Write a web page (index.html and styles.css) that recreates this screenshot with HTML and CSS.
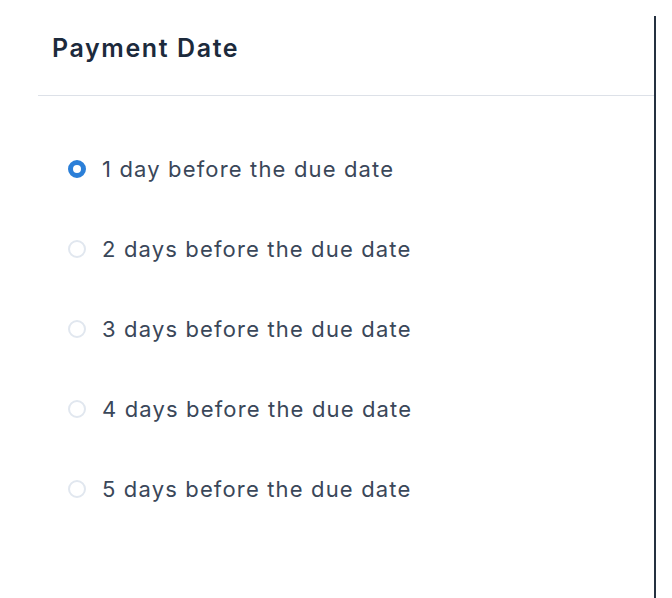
FILE: index.html
```html
<!DOCTYPE html>
<html>
<head>
<meta charset="utf-8">
<link rel="stylesheet" href="styles.css">
</head>
<body>
<div class="panel">
  <div class="header"><h2 class="title">Payment Date</h2></div>
  <div class="options">
    <label class="option"><span class="radio checked"></span><span class="label">1 day before the due date</span></label>
    <label class="option"><span class="radio"></span><span class="label">2 days before the due date</span></label>
    <label class="option"><span class="radio"></span><span class="label">3 days before the due date</span></label>
    <label class="option"><span class="radio"></span><span class="label">4 days before the due date</span></label>
    <label class="option"><span class="radio"></span><span class="label">5 days before the due date</span></label>
  </div>
</div>
</body>
</html>
```
FILE: styles.css
```css
html, body { margin: 0; padding: 0; background: #fff; }
body { font-family: Inter, "Noto Sans", sans-serif; height: 598px; overflow: hidden; }
.panel {
  margin-left: 38px;
  margin-top: 16px;
  width: 616px;
  height: 582px;
  border-right: 2px solid #253140;
}
.header {
  height: 80px;
  border-bottom: 1px solid #dde1e8;
  padding-left: 14px;
  padding-top: 17px;
  box-sizing: border-box;
}
.title { margin: 0; font-size: 25px; line-height: 30px; font-weight: 600; color: #1c2a3c; letter-spacing: 1.6px; }
.options { display: flex; flex-direction: column; padding-top: 53px; padding-left: 30px; gap: 40px; }
.option { display: flex; align-items: center; gap: 16px; height: 40px; }
.radio { width: 18px; height: 18px; box-sizing: border-box; border-radius: 50%; border: 2.5px solid #e1e7ef; flex: none; }
.radio.checked { border: 5.5px solid #2b7fd8; }
.label { font-size: 22px; color: #3a4759; letter-spacing: 1.15px; }
```
